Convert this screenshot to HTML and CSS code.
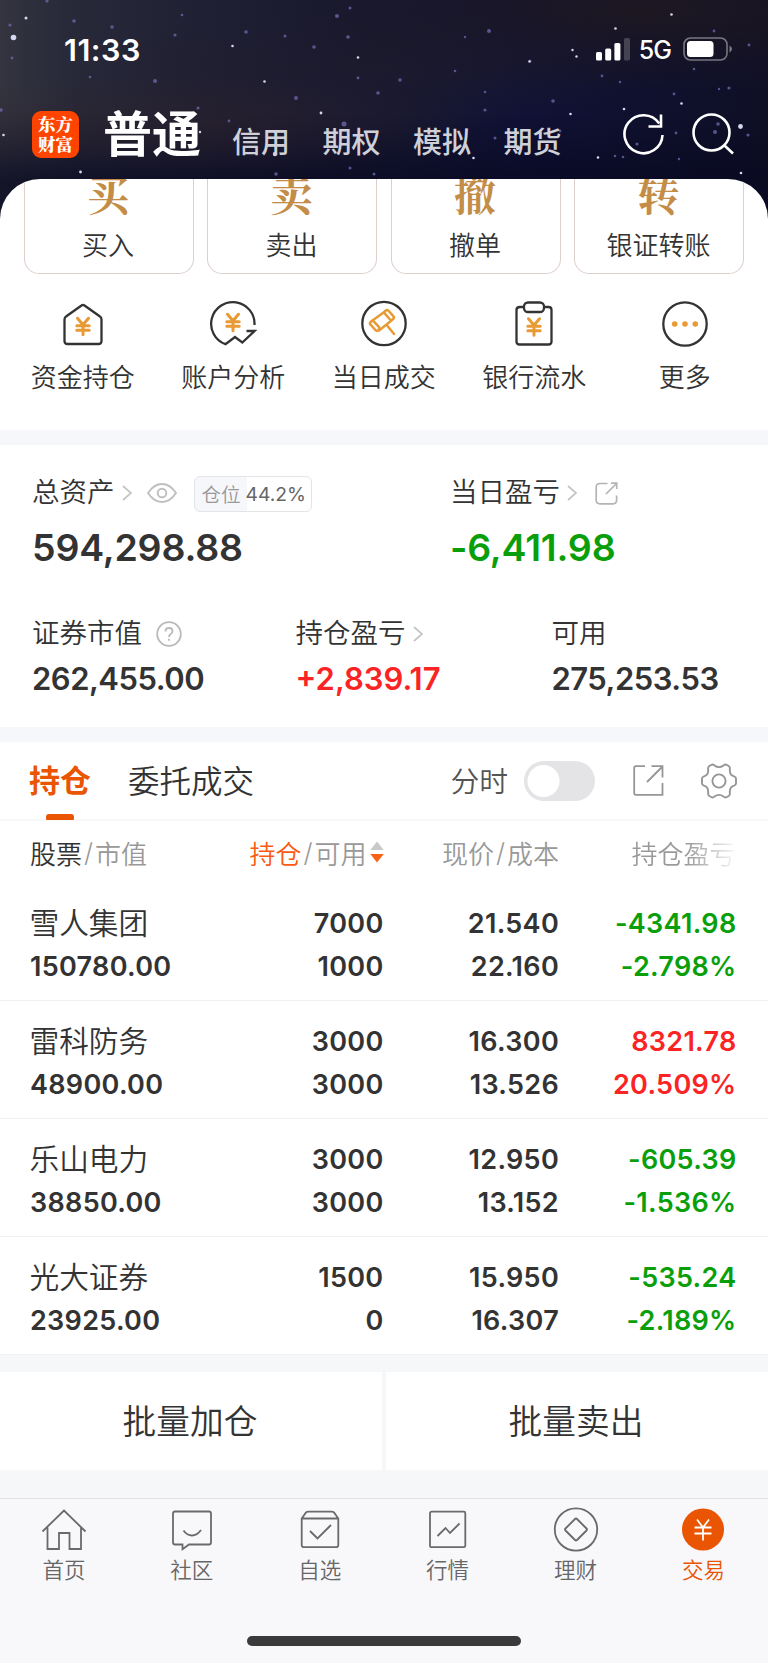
FILE: index.html
```html
<!DOCTYPE html>
<html lang="zh-CN">
<head>
<meta charset="utf-8">
<title>交易</title>
<link rel="stylesheet" href="styles.css">
</head>
<body>
<svg width="0" height="0" class="defs">
  <symbol id="yen" viewBox="0 0 16 20"><path d="M2.5 2 8 8.5 13.500 2M8 8.500V18.500M1.800 9.500h12.400M1.800 14h12.400" fill="none" stroke="currentColor" stroke-width="3" stroke-linecap="round" stroke-linejoin="round"/></symbol>
  <symbol id="chev" viewBox="0 0 10 16"><path d="M1 1 9 8 1 15" fill="none" stroke="#c4c4c4" stroke-width="1.7"/></symbol>
</svg>
<div class="app">
  <header class="top">
    <svg class="sky" viewBox="0 0 768 224" id="sky">
      <g fill="#6f6ab0" opacity=".75">
        <circle cx="74" cy="21" r="1.8"/><circle cx="112" cy="27" r="1.8"/><circle cx="10" cy="25" r="1.6"/><circle cx="47" cy="1" r="1.6"/><circle cx="155" cy="81" r="2"/><circle cx="175" cy="35" r="1.6"/><circle cx="182" cy="15" r="1.3"/><circle cx="246" cy="32" r="1.8"/><circle cx="285" cy="36" r="1.5"/><circle cx="314" cy="47" r="1.8"/><circle cx="337" cy="16" r="2"/><circle cx="350" cy="8" r="1.5"/><circle cx="348" cy="37" r="1.8"/><circle cx="296" cy="98" r="2"/><circle cx="378" cy="93" r="1.8"/><circle cx="344" cy="124" r="2.5"/><circle cx="358" cy="78" r="1.4"/><circle cx="198" cy="108" r="1.6"/><circle cx="90" cy="77" r="1.3"/><circle cx="12" cy="58" r="1.4"/><circle cx="1" cy="110" r="1.8"/><circle cx="276" cy="174" r="1.8"/><circle cx="350" cy="168" r="1.5"/><circle cx="374" cy="174" r="1.5"/><circle cx="229" cy="121" r="1.4"/>
        <circle cx="489" cy="31" r="2"/><circle cx="400" cy="80" r="1.8"/><circle cx="530" cy="61" r="1.6"/><circle cx="553" cy="101" r="1.8"/><circle cx="485" cy="92" r="1.3"/><circle cx="485" cy="110" r="1.6"/><circle cx="455" cy="71" r="1.3"/><circle cx="465" cy="37" r="1.2"/><circle cx="495" cy="138" r="1.5"/><circle cx="560" cy="131" r="1.4"/><circle cx="602" cy="76" r="1.4"/><circle cx="674" cy="94" r="1.4"/><circle cx="729" cy="88" r="1.6"/><circle cx="719" cy="89" r="1.2"/><circle cx="714" cy="31" r="1.4"/><circle cx="749" cy="45" r="1.4"/><circle cx="694" cy="69" r="1.3"/><circle cx="718" cy="124" r="1.8"/><circle cx="715" cy="132" r="2"/><circle cx="748" cy="135" r="1.6"/><circle cx="676" cy="133" r="1.4"/><circle cx="615" cy="156" r="1.3"/><circle cx="623" cy="157" r="1.3"/><circle cx="637" cy="144" r="1.6"/><circle cx="679" cy="159" r="1.2"/><circle cx="620" cy="82" r="1.2"/>
      </g>
      <g fill="#d4d7f0">
        <circle cx="13.500" cy="37.500" r="2.800"/><circle cx="26" cy="18" r="1.5"/><circle cx="232.500" cy="46" r="1.3"/><circle cx="264.500" cy="81.500" r="1.3"/><circle cx="358" cy="57.500" r="1.3"/><circle cx="321" cy="113" r="1.4"/><circle cx="3.500" cy="135" r="1.3"/><circle cx="80.500" cy="172" r="1.4"/><circle cx="200" cy="132" r="1.2"/><circle cx="275" cy="154" r="2.2"/><circle cx="671.500" cy="14.500" r="1.3"/><circle cx="615.500" cy="28.500" r="1.3"/><circle cx="572.500" cy="50" r="1.2"/><circle cx="576.500" cy="56.500" r="1.2"/><circle cx="529.500" cy="61.500" r="1.2"/><circle cx="570.500" cy="114" r="1.3"/><circle cx="624" cy="109" r="1.3"/><circle cx="681.500" cy="103.500" r="1.3"/><circle cx="740.500" cy="126.500" r="2.400"/><circle cx="473.500" cy="158" r="1.3"/><circle cx="598" cy="157.500" r="1.3"/><circle cx="741" cy="173" r="1.3"/><circle cx="518" cy="148" r="2.2"/>
      </g>
    </svg>
    <div class="status">
      <span class="clock">11:33</span>
      <div class="signals">
        <svg width="34" height="23" viewBox="0 0 34 23"><g fill="#fff"><rect x="0" y="14" width="6" height="8.500" rx="1.500"/><rect x="9.200" y="10.500" width="6" height="12" rx="1.500"/><rect x="18.400" y="5" width="6" height="17.500" rx="1.500"/><rect x="28" y="0" width="6" height="22.500" rx="1.500" opacity=".2"/></g></svg>
        <span class="net">5G</span>
        <svg width="50" height="24" viewBox="0 0 50 24"><rect x="1" y="1" width="43" height="22" rx="6.500" fill="none" stroke="#fff" stroke-opacity=".42" stroke-width="1.600"/><rect x="4" y="4" width="26.500" height="16" rx="3.500" fill="#fff"/><path d="M46.500 8.500q5 3.500 0 7z" fill="#fff" opacity=".45"/></svg>
      </div>
    </div>
    <nav class="accounts">
      <div class="logo"><span>东方</span><span>财富</span></div>
      <b class="acc-on">普通</b>
      <span class="acc">信用</span><span class="acc">期权</span><span class="acc">模拟</span><span class="acc">期货</span>
      <svg class="refresh" width="42" height="42" viewBox="0 0 42 42" fill="none" stroke="#fff" stroke-width="2.600"><path d="M39.500 22A19 19 0 1 1 36.200 10.500"/><path d="M38 1.500V13.500H25.500"/></svg>
      <svg width="42" height="42" viewBox="0 0 42 42" fill="none" stroke="#fff" stroke-width="2.600"><circle cx="19.500" cy="19.500" r="18"/><path d="M32.500 32.500 41 40.500"/></svg>
    </nav>
  </header>

  <main class="sheet">
    <section class="trade">
      <div class="tbtn"><i>买</i><span>买入</span></div>
      <div class="tbtn"><i>卖</i><span>卖出</span></div>
      <div class="tbtn"><i>撤</i><span>撤单</span></div>
      <div class="tbtn"><i>转</i><span>银证转账</span></div>
    </section>
    <section class="tools">
      <div class="tool"><svg viewBox="0 0 48 48"><path d="M5.500 20.500Q5.500 18.500 7 17.500L22.500 6.500Q24 5.300 25.500 6.500L41 17.500Q42.500 18.500 42.500 20.500V42Q42.500 45 39.500 45H8.500Q5.500 45 5.500 42Z"/><use href="#yen" x="16" y="17" width="16" height="20.500"/></svg><span>资金持仓</span></div>
      <div class="tool"><svg viewBox="0 0 48 48"><path d="M45.500 26A21.700 21.700 0 1 0 16.500 45.200L26 38 33.300 43.500 45.500 32H37.500" stroke-linejoin="miter"/><use href="#yen" x="16" y="13" width="16" height="20.500"/></svg><span>账户分析</span></div>
      <div class="tool"><svg viewBox="0 0 48 48"><circle cx="24" cy="24.500" r="21.700"/><g stroke="#e89a35" stroke-width="2.500" stroke-linecap="round"><path d="M12.500 21.500 25 12.500M19 31.500 31.500 21.500M26.700 26 34 35"/><rect x="-2.300" y="-5.600" width="4.600" height="11.200" rx="2" transform="translate(14.700 26.800) rotate(-42)"/><rect x="-2.300" y="-5.600" width="4.600" height="11.200" rx="2" transform="translate(29.200 16) rotate(-42)"/></g></svg><span>当日成交</span></div>
      <div class="tool"><svg viewBox="0 0 48 48"><path d="M14 8H10Q6.500 8 6.500 11V42.500Q6.500 45.500 9.500 45.500H38.500Q41.500 45.500 41.500 42.500V11Q41.500 8 38.500 8H34"/><rect x="14" y="3.500" width="20" height="9.500" rx="4"/><use href="#yen" x="16" y="17.500" width="16" height="20.500"/></svg><span>银行流水</span></div>
      <div class="tool"><svg viewBox="0 0 48 48"><circle cx="24" cy="25" r="21.700"/><g fill="#e89a35" stroke="none"><circle cx="13.700" cy="25" r="2.800"/><circle cx="24" cy="25" r="2.800"/><circle cx="34.300" cy="25" r="2.800"/></g></svg><span>更多</span></div>
    </section>

    <section class="assets">
      <div class="row main-row">
        <div class="cell c-total">
          <div class="lab"><span>总资产</span><svg class="chev" width="10" height="16"><use href="#chev"/></svg>
            <svg class="eye" width="30" height="20" viewBox="0 0 30 20" fill="none" stroke="#bfbfbf" stroke-width="1.900"><path d="M1 10Q7 1 15 1T29 10Q23 19 15 19T1 10Z"/><circle cx="15" cy="10" r="4.300"/></svg>
            <div class="pill"><em>仓位</em><b>44.2%</b></div></div>
          <div class="big">594,298.88</div>
        </div>
        <div class="cell">
          <div class="lab"><span>当日盈亏</span><svg class="chev" width="10" height="16"><use href="#chev"/></svg>
            <svg class="share1" width="23" height="23" viewBox="0 0 23 23" fill="none" stroke="#b4b4b4" stroke-width="1.700"><path d="M12.500 1.500H5Q1.200 1.500 1.200 5V18Q1.200 21.800 5 21.800H18Q21.600 21.800 21.600 18V13.500M11 12 21 2M16 1.200H21.700V7"/></svg></div>
          <div class="big down">-6,411.98</div>
        </div>
      </div>
      <div class="row sub-row">
        <div class="cell c-mv"><div class="lab"><span>证券市值</span><svg class="help" width="26" height="26" viewBox="0 0 26 26" fill="none" stroke="#b9b9b9" stroke-width="1.800"><circle cx="13" cy="13" r="11.800"/><path d="M9.500 10.500Q9.500 7 13 7T16.500 10.300Q16.500 12 14.500 13.200Q13 14.200 13 16M13 17.800V19.800"/></svg></div><div class="mid">262,455.00</div></div>
        <div class="cell c-pl"><div class="lab"><span>持仓盈亏</span><svg class="chev" width="10" height="16"><use href="#chev"/></svg></div><div class="mid up">+2,839.17</div></div>
        <div class="cell"><div class="lab"><span>可用</span></div><div class="mid">275,253.53</div></div>
      </div>
    </section>

    <section class="hold">
      <div class="tabs">
        <b class="tab-on">持仓</b><span class="tab">委托成交</span>
        <span class="ts">分时</span><span class="toggle"></span>
        <svg class="share2" width="31" height="31" viewBox="0 0 31 31" fill="none" stroke="#969696" stroke-width="1.800"><path d="M12 1.200H3Q1.200 1.200 1.200 3V28Q1.200 29.800 3 29.800H29.500V18M14 17 29 2M18.500 1.200H29.500V12.500"/></svg>
        <svg class="gear" width="36" height="36" viewBox="0 0 36 36" fill="none" stroke="#969696" stroke-width="1.900"><circle cx="18" cy="18" r="6.600"/><path d="M10.500 1.800Q12 1 13.500 2.400Q18 5.800 22.500 2.400Q24 1 25.500 1.800L28 3.300Q29.200 4.200 28.800 6.500Q28.500 12 33 13.300Q35 14 35 15.500V20.500Q35 22 33 22.700Q28.500 24 28.800 29.500Q29.200 31.800 28 32.700L25.500 34.200Q24 35 22.500 33.600Q18 30.200 13.500 33.600Q12 35 10.500 34.200L8 32.700Q6.800 31.800 7.200 29.500Q7.500 24 3 22.700Q1 22 1 20.500V15.500Q1 14 3 13.300Q7.500 12 7.200 6.500Q6.800 4.200 8 3.300Z"/></svg>
      </div>
      <div class="grid thead">
        <div class="h1"><span class="dark">股票</span><s>/</s>市值</div>
        <div class="h2"><span class="org">持仓</span><s>/</s>可用<svg width="14" height="22" viewBox="0 0 14 22"><path d="M7 .5 13.700 9H.3Z" fill="#c9c9c9"/><path d="M7 21.500.3 13H13.700Z" fill="#fb6112"/></svg></div>
        <div class="h3">现价<s>/</s>成本</div>
        <div class="h4">持仓盈亏</div>
      </div>
      <div class="grid stock"><div class="name">雪人集团</div><div>7000</div><div>21.540</div><div class="down">-4341.98</div><div>150780.00</div><div>1000</div><div>22.160</div><div class="down">-2.798%</div></div>
      <div class="grid stock"><div class="name">雷科防务</div><div>3000</div><div>16.300</div><div class="up">8321.78</div><div>48900.00</div><div>3000</div><div>13.526</div><div class="up">20.509%</div></div>
      <div class="grid stock"><div class="name">乐山电力</div><div>3000</div><div>12.950</div><div class="down">-605.39</div><div>38850.00</div><div>3000</div><div>13.152</div><div class="down">-1.536%</div></div>
      <div class="grid stock"><div class="name">光大证券</div><div>1500</div><div>15.950</div><div class="down">-535.24</div><div>23925.00</div><div>0</div><div>16.307</div><div class="down">-2.189%</div></div>
    </section>
    <section class="batch"><div>批量加仓</div><div>批量卖出</div></section>
  </main>

  <footer class="bar">
    <div class="items">
      <div class="item"><svg viewBox="0 0 46 46"><path d="M1.500 24.500 23 3.500 44.500 24.500M6.500 20.500V42H18V26H28.500V42H40V20.500"/></svg><span>首页</span></div>
      <div class="item"><svg viewBox="0 0 46 46"><path d="M6 4.500H40Q42 4.500 42 6.500V35.500Q42 37.500 40 37.500H20L13.500 42.300V37.500H6Q4 37.500 4 35.500V6.500Q4 4.500 6 4.500ZM14.500 23.500Q18 28.500 23 28.500T32 23"/></svg><span>社区</span></div>
      <div class="item"><svg viewBox="0 0 46 46"><path d="M4.700 11.500 9 5.500Q10 4.700 11 4.700H35Q36 4.700 37 5.500L41.300 11.500V38Q41.300 40.200 39 40.200H7Q4.700 40.200 4.700 38ZM4.700 11.500H41.300M13 24 20.500 31.500 34 18"/></svg><span>自选</span></div>
      <div class="item"><svg viewBox="0 0 46 46"><rect x="5" y="4.700" width="35.300" height="35.500" rx="1.500"/><path d="M12.500 29 20.500 21 25 26 34.500 16.500"/></svg><span>行情</span></div>
      <div class="item"><svg viewBox="0 0 46 46"><circle cx="23" cy="22.500" r="21.200"/><path d="M22 12Q23 11 24 12L33.500 21.500Q34.500 22.500 33.500 23.500L24 33Q23 34 22 33L12.500 23.500Q11.500 22.500 12.500 21.500Z"/></svg><span>理财</span></div>
      <div class="item on"><svg viewBox="0 0 46 46"><circle cx="23" cy="22.500" r="21" fill="#ea5504" stroke="none"/><path d="M17 12.500 23 20.500 29 12.500M23 20.500V33.500M14.500 20.500H31.500M14.500 26.500H31.500" stroke="#fff"/></svg><span>交易</span></div>
    </div>
    <div class="home"></div>
  </footer>
</div>
</body>
</html>
```

FILE: styles.css
```css
* { box-sizing: border-box; }
body { margin: 0; background: #f6f7f9; }
.defs { position: absolute; }
.app {
  width: 768px; height: 1663px; overflow: hidden; position: relative;
  font-family: Inter, "Noto Sans CJK SC", sans-serif;
  font-weight: 350; color: #333; display: flex; flex-direction: column;
}
svg { display: block; flex: none; }
i, em { font-style: normal; }
s { text-decoration: none; }

.top {
  height: 179px; flex: none; position: relative; color: #fff;
}
.sky {
  position: absolute; left: 0; top: 0; width: 768px; height: 224px;
  background:
    radial-gradient(ellipse 300px 50px at 190px 125px, rgba(46, 34, 42, .5), transparent),
    radial-gradient(ellipse 420px 80px at 640px 10px, rgba(30, 24, 32, .9), transparent),
    radial-gradient(ellipse 300px 60px at 380px 70px, rgba(32, 28, 42, .6), transparent),
    linear-gradient(180deg, transparent 50%, rgba(8, 8, 32, .7) 80%),
    linear-gradient(90deg, #33343f 0, #272838 80px, #1f1f33 220px, #171832 370px, #101236 520px, #0f0f26 768px);
}
.status {
  position: relative; height: 98px; padding: 0 35px 0 64px;
  display: flex; justify-content: space-between; align-items: center;
}
.clock { font-size: 30.500px; font-weight: 600; letter-spacing: .5px; }
.signals { display: flex; align-items: center; }
.net { font-size: 25px; font-weight: 500; margin: 2px 12px 0 9px; letter-spacing: -1px; }
.accounts { position: relative; display: flex; align-items: center; height: 72px; padding-left: 32px; }
.logo {
  width: 47px; height: 47px; border-radius: 9px; background: #ff4400; flex: none;
  display: flex; flex-direction: column; align-items: center; justify-content: center;
  font: 900 17.500px/20px "Noto Serif CJK SC", "Noto Sans CJK SC", serif;
}
.acc-on { font-size: 49px; font-weight: 700; line-height: 60px; margin: 1px 31px 0 24px; }
.acc { font-size: 29px; font-weight: 500; color: #cfd0d8; line-height: 40px; margin: 17px 32.500px 0 0; }
.acc:nth-of-type(4) { margin-right: 0; }
.refresh { margin: 0 27px 0 61px; }
.acc + .refresh { margin-left: 61px; }

.sheet { height: 1319px; flex: none; position: relative; background: #fff; border-radius: 40px 40px 0 0; overflow: hidden; }
.trade { display: grid; grid-template-columns: repeat(4, 170px); column-gap: 13.500px; padding: 0 23.500px; height: 95px; }
.tbtn {
  height: 95px; border: 1.500px solid #ddd0cc; border-top: 0; border-radius: 0 0 15px 15px;
  display: flex; flex-direction: column; align-items: center; position: relative; padding-right: 1px;
}
.tbtn i { font: 700 42px/50px "Noto Serif CJK SC", "Noto Sans CJK SC", serif; color: #c38d48; margin-top: -11px; height: 50px; }
.tbtn span { font-size: 26px; line-height: 36px; margin-top: 10px; }
.tools { display: grid; grid-template-columns: repeat(5, 150.500px); padding: 25px 8px 0 7.500px; height: 156px; }
.tool { display: flex; flex-direction: column; align-items: center; color: #e89a35; }
.tool svg { width: 48px; height: 48px; fill: none; stroke: #333; stroke-width: 2.300; stroke-linejoin: round; }
.tool span { font-size: 26px; line-height: 36px; margin-top: 13px; color: #333; white-space: nowrap; }

.assets { border-top: 15px solid #f5f7fa; border-bottom: 15px solid #f5f7fa; height: 312px; padding: 28px 32px 0; }
.row { display: flex; }
.c-total { width: 418px; }
.c-mv { width: 263.500px; }
.c-pl { width: 256px; }
.lab { display: flex; align-items: center; height: 40px; font-size: 27.500px; white-space: nowrap; }
.lab > span { line-height: 40px; padding-bottom: 3px; }
.chev { margin-left: 7px; }
.eye { margin-left: 15px; }
.pill {
  display: flex; align-items: center; margin-left: 17px; width: 118px; height: 36px;
  border: 1.500px solid #e3e4e8; border-radius: 6px; overflow: hidden; padding-left: 7px;
  background: linear-gradient(90deg, #f6f7fa 52px, #fff 52px); margin-top: 2px;
}
.pill em { font-size: 19.500px; color: #999; margin: -2px 5px 0 0; }
.pill b { font-size: 19.300px; font-weight: 400; color: #666; }
.share1 { margin-left: 18px; }
.help { margin-left: 14px; }
.big { font-size: 37.500px; font-weight: 600; line-height: 46px; margin-top: 12px; letter-spacing: -.2px; }
.sub-row { margin-top: 43px; }
.mid { font-size: 31px; font-weight: 600; line-height: 40px; margin-top: 5px; letter-spacing: -.5px; }
.up { color: #fa2424; }
.down { color: #0a9f0a; }
.mid.up { letter-spacing: 0; }

.hold { height: 613px; }
.tabs { height: 79px; display: flex; align-items: center; padding-left: 29px; border-bottom: 2px solid #f6f7f9; position: relative; }
.tab-on { font-size: 31px; font-weight: 700; color: #ea5504; padding-bottom: 4px; }
.tab-on::after { content: ""; position: absolute; left: 46px; bottom: -1px; width: 28px; height: 6px; background: #ea5504; border-radius: 3px 3px 1px 1px; }
.tab { font-size: 31.500px; margin-left: 37px; padding-bottom: 4px; }
.ts { font-size: 28.800px; color: #555; margin-left: 196.500px; padding-bottom: 2px; }
.toggle { width: 71px; height: 40px; border-radius: 20px; background: radial-gradient(circle at 19.500px 20px, #fff 15.500px, #e4e4e7 16.500px); margin-left: 16px; }
.share2 { margin-left: 38px; }
.gear { margin-left: 37px; }
.grid { display: grid; grid-template-columns: 190.500px 163px 175.500px 176.500px; padding-left: 30px; }
.thead { height: 62px; align-items: center; font-size: 26px; color: #999; }
.thead div { display: flex; align-items: center; white-space: nowrap; }
.thead s { width: 13px; text-align: center; }
.thead .dark { color: #333; }
.thead .org { color: #fb5a10; }
.h2, .h3, .h4 { justify-content: flex-end; }
.h2 svg { margin-left: 3px; }
.h4 { background: linear-gradient(90deg, #999 72%, #fff 102%); background-clip: text; -webkit-background-clip: text; color: transparent; }
.stock {
  height: 118px; padding-top: 19px; grid-template-rows: 43px 43px; align-items: center;
  font-size: 27px; font-weight: 600; text-align: right; letter-spacing: .3px; border-bottom: 1.500px solid #f1f2f4;
}
.stock div:nth-child(4n+1) { text-align: left; }
.stock div:nth-child(4n) { margin-right: -1px; }
.stock .name { font-size: 29.700px; font-weight: 350; letter-spacing: 0; padding-bottom: 4px; margin-left: -.5px; }
.batch {
  height: 144px; background: #f6f7f9; padding: 17px 0 29px;
  display: grid; grid-template-columns: 382px 382px; column-gap: 4px;
}
.batch div { background: #fff; font-size: 33.700px; display: flex; align-items: center; justify-content: center; padding: 0 2px 3px 0; }

.bar { height: 165px; flex: none; background: #f8f8fb; border-top: 1.500px solid #dfe1e5; display: flex; flex-direction: column; align-items: center; }
.items { width: 768px; display: grid; grid-template-columns: repeat(6, 127.900px); height: 137px; padding-top: 8px; }
.item { display: flex; flex-direction: column; align-items: center; font-size: 21.500px; color: #666; }
.item svg { width: 46px; height: 46px; fill: none; stroke: #6a6a6a; stroke-width: 1.800; }
.item span { line-height: 30px; margin-top: 2px; }
.item.on { color: #ea5504; }
.home { width: 274px; height: 10px; border-radius: 5px; background: #3a3a3a; }
```
